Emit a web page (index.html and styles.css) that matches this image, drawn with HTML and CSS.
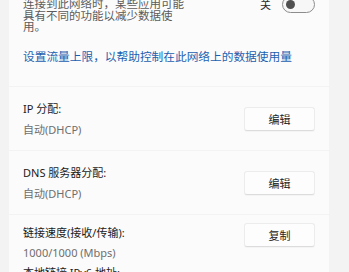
FILE: index.html
```html
<!DOCTYPE html>
<html lang="zh-CN">
<head>
<meta charset="utf-8">
<link rel="stylesheet" href="styles.css">
</head>
<body>
<div class="page">
  <section class="card card-top">
    <div class="top-left">
      <p class="desc">如果你的数据流量有限，当<br>连接到此网络时，某些应用可能<br>具有不同的功能以减少数据使<br>用。</p>
      <a class="link">设置流量上限，以帮助控制在此网络上的数据使用量</a>
    </div>
    <div class="top-right">
      <span class="toggle-label">关</span>
      <span class="toggle"><span class="knob"></span></span>
    </div>
  </section>

  <section class="card row">
    <div class="info">
      <div class="title">IP 分配:</div>
      <div class="value">自动(DHCP)</div>
    </div>
    <button class="btn">编辑</button>
  </section>

  <section class="card row">
    <div class="info">
      <div class="title">DNS 服务器分配:</div>
      <div class="value">自动(DHCP)</div>
    </div>
    <button class="btn">编辑</button>
  </section>

  <section class="card props">
    <div class="props-list">
      <div class="title prop-line">链接速度(接收/传输):</div>
      <div class="value prop-line">1000/1000 (Mbps)</div>
      <div class="title prop-line">本地链接 IPv6 地址:</div>
      <div class="value prop-line">fe80::1</div>
    </div>
    <button class="btn btn-top">复制</button>
  </section>
</div>
</body>
</html>
```

FILE: styles.css
```css
* { box-sizing: border-box; }
html, body {
  margin: 0;
  padding: 0;
  background: #f3f3f3;
  overflow: hidden;
}
body {
  width: 349px;
  height: 272px;
  font-family: "Noto Sans", "Noto Sans CJK SC", sans-serif;
  color: #1b1b1b;
}
.page {
  display: flex;
  flex-direction: column;
  gap: 1px;
  padding: 0 20px 0 9px;
  margin-top: -14px;
}
.card {
  background: #fbfbfb;
  padding-left: 14px;
  padding-right: 14px;
}
.card-top {
  display: flex;
  justify-content: space-between;
  align-items: flex-start;
  padding-bottom: 22px;
}
.top-left {
  flex: 1;
  min-width: 0;
}
.desc {
  margin: 0;
  padding-top: 0.5px;
  font-family: "Noto Sans CJK SC", sans-serif;
  font-size: 11.5px;
  line-height: 11.5px;
  color: #5c5c5c;
  white-space: nowrap;
}
.link {
  display: block;
  margin-top: 15px;
  font-family: "Noto Sans CJK SC", sans-serif;
  font-size: 11.7px;
  line-height: 16px;
  color: #1c5fb0;
  white-space: nowrap;
}
.top-right {
  flex-shrink: 0;
  display: flex;
  align-items: center;
  gap: 11px;
  margin-top: 9.5px;
}
.toggle-label {
  font-family: "Noto Sans CJK SC", sans-serif;
  font-size: 11px;
  line-height: 17px;
  color: #2a2a2a;
}
.toggle {
  width: 33px;
  height: 17px;
  border: 1px solid #8c8c8c;
  border-radius: 9px;
  background: #f7f7f7;
  display: flex;
  align-items: center;
  padding-left: 3px;
}
.knob {
  width: 9px;
  height: 9px;
  border-radius: 50%;
  background: #505050;
}
.row {
  display: flex;
  justify-content: space-between;
  align-items: center;
  padding-top: 14px;
  padding-bottom: 12px;
}
.info {
  display: flex;
  flex-direction: column;
  gap: 5px;
}
.title {
  font-size: 11px;
  line-height: 16px;
  color: #1a1a1a;
}
.value {
  font-size: 11px;
  line-height: 16px;
  color: #6e6e6e;
}
.btn {
  width: 71px;
  height: 24px;
  font-family: "Noto Sans CJK SC", sans-serif;
  font-size: 11px;
  color: #1f1f1f;
  background: #fdfdfd;
  border: 1px solid #ececec;
  border-bottom-color: #dcdcdc;
  border-radius: 3px;
  box-shadow: 0 1px 1px rgba(0,0,0,0.03);
  padding: 0;
}
.props {
  display: flex;
  justify-content: space-between;
  align-items: flex-start;
  padding-top: 8px;
  padding-bottom: 10px;
}
.prop-line {
  line-height: 20px;
}
.btn-top {
  margin-top: 0;
}
```
